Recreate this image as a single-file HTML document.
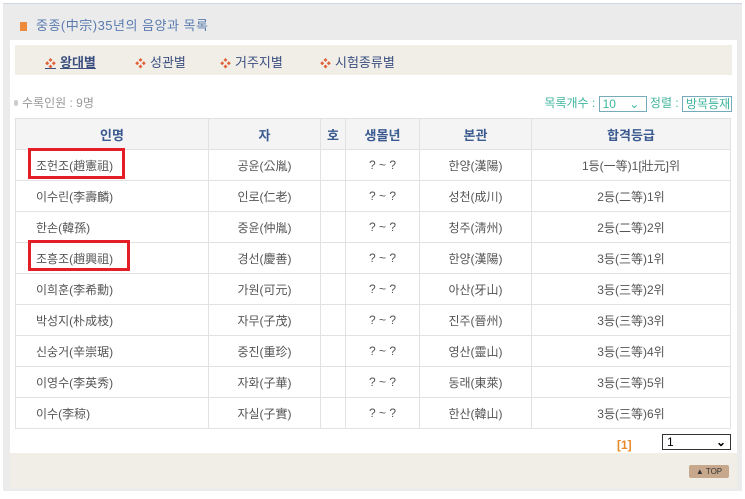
<!DOCTYPE html>
<html><head><meta charset="utf-8"><style>
*{margin:0;padding:0;box-sizing:border-box}
body{width:745px;height:499px;background:#fff;font-family:"Liberation Sans","Noto Sans CJK KR",sans-serif;font-size:12px;color:#555;position:relative;overflow:hidden}
.outer{position:absolute;left:3px;top:3px;width:739px;height:488px;background:#ebebeb;border-top:1px solid #cfd6e0}
.title{position:absolute;left:20px;top:15px;font-size:13px;color:#5a7bb0;letter-spacing:.5px}
.title i{display:inline-block;width:7px;height:9px;background:#ee8a3c;margin-right:9px;vertical-align:-1px}
.panel{position:absolute;left:10px;top:40px;width:727px;height:413px;background:#fff}
.bottom{position:absolute;left:10px;top:453px;width:727px;height:35px;background:#f1eee8}
.nav{position:absolute;left:15px;top:45px;width:717px;height:30px;background:#f1eee8;font-size:13px;color:#3a4f80}
.nav span{position:absolute;top:7px}
.nav b{color:#e0623a;font-size:11px;margin-right:4px}
.cnt{position:absolute;left:14px;top:94px;color:#999;font-size:12px}
.cnt:before{content:"";display:inline-block;width:4px;height:6px;background:#ccc;border-radius:2px;margin-right:4px;vertical-align:1px}
.opt{position:absolute;right:13px;top:94px;color:#3fb59d;font-size:12px;white-space:nowrap}
.sel{display:inline-block;border:1px solid #7ab;height:16px;line-height:14px;padding:0 3px;color:#3fb59d;vertical-align:middle;white-space:nowrap;overflow:hidden}
table{position:absolute;left:15px;top:118px;width:716px;border-collapse:collapse}
td,th{border:1px solid #e2e2e2;height:31px;text-align:center;font-weight:normal;font-size:12px;color:#555}
th{background:#f4f4f4;color:#3a5a90;font-weight:bold;font-size:13px}
td.l{text-align:left;padding-left:20px}
.red{position:absolute;left:28px;border:3px solid #e41e26;height:31px}
.pg{position:absolute;left:617px;top:438px;color:#e88a2a;font-weight:bold;font-size:12px}
.ps{position:absolute;left:662px;top:434px;width:69px;height:16px;border:1px solid #333;background:#fff;font-size:12px;line-height:14px;padding-left:4px;color:#000}
.top{position:absolute;left:689px;top:465px;width:40px;height:13px;background:#c7a88c;font-size:8px;color:#333;text-align:center;line-height:13px;border-radius:2px}
</style></head><body>
<div class="outer"></div>
<div class="title"><i></i>중종(中宗)35년의 음양과 목록</div>
<div class="panel"></div>
<div class="bottom"></div>
<div class="nav">
<span style="left:30px;font-weight:bold;text-decoration:underline"><b>❖</b>왕대별</span>
<span style="left:120px"><b>❖</b>성관별</span>
<span style="left:205px"><b>❖</b>거주지별</span>
<span style="left:305px"><b>❖</b>시험종류별</span>
</div>
<div class="cnt">수록인원 : 9명</div>
<div class="opt">목록개수 : <span class="sel" style="width:48px">10 &nbsp;&nbsp;&nbsp;⌄</span> 정렬 : <span class="sel" style="width:50px">방목등재</span></div>
<table>
<tr><th style="width:193px">인명</th><th style="width:112px">자</th><th style="width:25px">호</th><th style="width:74px">생몰년</th><th style="width:112px">본관</th><th>합격등급</th></tr>
<tr><td class="l">조헌조(趙憲祖)</td><td>공윤(公胤)</td><td></td><td>? ~ ?</td><td>한양(漢陽)</td><td>1등(一等)1[壯元]위</td></tr>
<tr><td class="l">이수린(李壽麟)</td><td>인로(仁老)</td><td></td><td>? ~ ?</td><td>성천(成川)</td><td>2등(二等)1위</td></tr>
<tr><td class="l">한손(韓孫)</td><td>중윤(仲胤)</td><td></td><td>? ~ ?</td><td>청주(淸州)</td><td>2등(二等)2위</td></tr>
<tr><td class="l">조흥조(趙興祖)</td><td>경선(慶善)</td><td></td><td>? ~ ?</td><td>한양(漢陽)</td><td>3등(三等)1위</td></tr>
<tr><td class="l">이희훈(李希勳)</td><td>가원(可元)</td><td></td><td>? ~ ?</td><td>아산(牙山)</td><td>3등(三等)2위</td></tr>
<tr><td class="l">박성지(朴成枝)</td><td>자무(子茂)</td><td></td><td>? ~ ?</td><td>진주(晉州)</td><td>3등(三等)3위</td></tr>
<tr><td class="l">신숭거(辛崇琚)</td><td>중진(重珍)</td><td></td><td>? ~ ?</td><td>영산(靈山)</td><td>3등(三等)4위</td></tr>
<tr><td class="l">이영수(李英秀)</td><td>자화(子華)</td><td></td><td>? ~ ?</td><td>동래(東萊)</td><td>3등(三等)5위</td></tr>
<tr><td class="l">이수(李稤)</td><td>자실(子實)</td><td></td><td>? ~ ?</td><td>한산(韓山)</td><td>3등(三等)6위</td></tr>
</table>
<div class="red" style="top:148px;width:97px"></div>
<div class="red" style="top:240px;width:102px"></div>
<div class="pg">[1]</div>
<div class="ps">1<span style="position:absolute;right:4px;font-weight:bold">⌄</span></div>
<div class="top">▲ TOP</div>
</body></html>
